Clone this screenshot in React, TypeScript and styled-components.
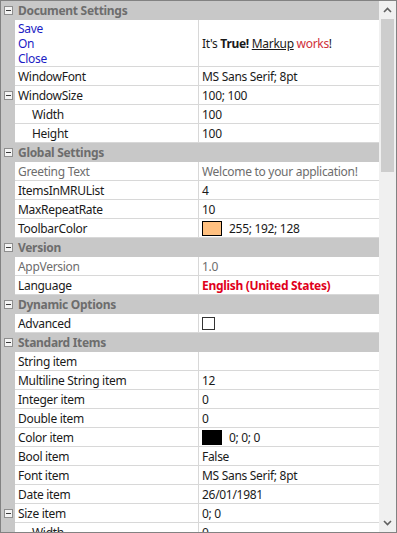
import React from 'react';
import styled, { createGlobalStyle } from 'styled-components';

const GlobalStyle = createGlobalStyle`
    html, body {
        margin: 0;
        padding: 0;
        background: #fff;
    }
    body {
        font-family: 'Noto Sans', 'Liberation Sans', sans-serif;
        font-size: 12px;
        letter-spacing: -0.3px;
        color: #1a1a1a;
    }
`;

const GridFrame = styled.div`
    width: 397px;
    height: 533px;
    box-sizing: border-box;
    border: 1px solid #828282;
    display: flex;
    overflow: hidden;
    background: #fff;
`;

const RowsArea = styled.div`
    flex: 1;
    display: flex;
    flex-direction: column;
    overflow: hidden;
`;

const CategoryRow = styled.div`
    flex: none;
    height: 19px;
    display: grid;
    grid-template-columns: 14px 1fr;
    align-items: center;
    background: #c8c8c8;
    color: #6d6d6d;
    font-weight: bold;
`;

const PropRow = styled.div<{ tall?: number }>`
    flex: none;
    height: ${p => (p.tall ? p.tall : 19)}px;
    display: grid;
    grid-template-columns: 14px 184px 1fr;
`;

const MarginCell = styled.div`
    background: #c8c8c8;
    display: flex;
    align-items: center;
    justify-content: center;
`;

const NameCell = styled.div<{ indent?: boolean; disabled?: boolean }>`
    box-sizing: border-box;
    border-bottom: 1px solid #d8d8d8;
    border-right: 1px solid #d8d8d8;
    padding-left: ${p => (p.indent ? 17 : 3)}px;
    display: flex;
    align-items: center;
    white-space: nowrap;
    overflow: hidden;
    color: ${p => (p.disabled ? '#6d6d6d' : 'inherit')};
`;

const ValueCell = styled.div<{ disabled?: boolean; accent?: boolean }>`
    box-sizing: border-box;
    border-bottom: 1px solid #d8d8d8;
    padding-left: 3px;
    display: flex;
    align-items: center;
    gap: 7px;
    white-space: nowrap;
    overflow: hidden;
    color: ${p => (p.disabled ? '#6d6d6d' : p.accent ? '#e0001b' : 'inherit')};
    font-weight: ${p => (p.accent ? 'bold' : 'normal')};
`;

const CategoryLabel = styled.div`
    padding-left: 3px;
`;

const Expander = styled.span`
    width: 9px;
    height: 9px;
    box-sizing: border-box;
    border: 1px solid #8e8e8e;
    background: #f4f4f4;
    position: relative;
    &::after {
        content: '';
        position: absolute;
        left: 1px;
        right: 1px;
        top: 3px;
        height: 1px;
        background: #3c3c3c;
    }
`;

const LinkList = styled.div`
    display: flex;
    flex-direction: column;
    line-height: 15px;
    color: #1c1cc4;
`;

const Swatch = styled.span<{ color: string }>`
    width: 20px;
    height: 15px;
    box-sizing: border-box;
    border: 1px solid #000;
    background: ${p => p.color};
    flex: none;
`;

const CheckBox = styled.span`
    width: 13px;
    height: 13px;
    box-sizing: border-box;
    border: 1px solid #333;
    background: #fff;
`;

const Bold = styled.b``;
const Underlined = styled.span`
    text-decoration: underline;
`;
const RedText = styled.span`
    color: #d0303a;
`;

const ScrollTrack = styled.div`
    width: 17px;
    flex: none;
    background: #f0f0f0;
    display: flex;
    flex-direction: column;
    align-items: center;
`;

const ScrollButton = styled.div`
    height: 18px;
    width: 17px;
    display: flex;
    align-items: center;
    justify-content: center;
    flex: none;
`;

const ScrollThumb = styled.div`
    width: 13px;
    height: 153px;
    background: #cdcdcd;
    flex: none;
`;

const ScrollSpacer = styled.div`
    flex: 1;
`;

const Chevron = ({ down }: { down?: boolean }) => (
    <svg width="9" height="6" viewBox="0 0 9 6">
        <path
            d={down ? 'M1 1 L4.5 4.5 L8 1' : 'M1 5 L4.5 1.5 L8 5'}
            fill="none"
            stroke="#606060"
            strokeWidth="1.6"
        />
    </svg>
);

type Item =
    | { kind: 'cat'; label: string }
    | {
          kind: 'prop';
          name: string;
          value: React.ReactNode;
          indent?: boolean;
          expand?: boolean;
          disabled?: boolean;
          accent?: boolean;
          tall?: number;
          nameNode?: React.ReactNode;
      };

const items: Item[] = [
    { kind: 'cat', label: 'Document Settings' },
    {
        kind: 'prop',
        name: '',
        tall: 47,
        nameNode: (
            <LinkList>
                <span>Save</span>
                <span>On</span>
                <span>Close</span>
            </LinkList>
        ),
        value: (
            <span>
                It's <Bold>True!</Bold> <Underlined>Markup</Underlined> <RedText>works</RedText>!
            </span>
        ),
    },
    { kind: 'prop', name: 'WindowFont', value: 'MS Sans Serif; 8pt' },
    { kind: 'prop', name: 'WindowSize', value: '100; 100', expand: true },
    { kind: 'prop', name: 'Width', value: '100', indent: true },
    { kind: 'prop', name: 'Height', value: '100', indent: true },
    { kind: 'cat', label: 'Global Settings' },
    { kind: 'prop', name: 'Greeting Text', value: 'Welcome to your application!', disabled: true },
    { kind: 'prop', name: 'ItemsInMRUList', value: '4' },
    { kind: 'prop', name: 'MaxRepeatRate', value: '10' },
    {
        kind: 'prop',
        name: 'ToolbarColor',
        value: (
            <>
                <Swatch color="#ffc080" />
                <span>255; 192; 128</span>
            </>
        ),
    },
    { kind: 'cat', label: 'Version' },
    { kind: 'prop', name: 'AppVersion', value: '1.0', disabled: true },
    { kind: 'prop', name: 'Language', value: 'English (United States)', accent: true },
    { kind: 'cat', label: 'Dynamic Options' },
    { kind: 'prop', name: 'Advanced', value: <CheckBox /> },
    { kind: 'cat', label: 'Standard Items' },
    { kind: 'prop', name: 'String item', value: '' },
    { kind: 'prop', name: 'Multiline String item', value: '12' },
    { kind: 'prop', name: 'Integer item', value: '0' },
    { kind: 'prop', name: 'Double item', value: '0' },
    {
        kind: 'prop',
        name: 'Color item',
        value: (
            <>
                <Swatch color="#000" />
                <span>0; 0; 0</span>
            </>
        ),
    },
    { kind: 'prop', name: 'Bool item', value: 'False' },
    { kind: 'prop', name: 'Font item', value: 'MS Sans Serif; 8pt' },
    { kind: 'prop', name: 'Date item', value: '26/01/1981' },
    { kind: 'prop', name: 'Size item', value: '0; 0', expand: true },
    { kind: 'prop', name: 'Width', value: '0', indent: true },
];

const App = () => {
    return (
        <>
            <GlobalStyle />
            <GridFrame>
                <RowsArea>
                    {items.map((item, i) => {
                        if (item.kind === 'cat') {
                            return (
                                <CategoryRow key={i}>
                                    <MarginCell>
                                        <Expander />
                                    </MarginCell>
                                    <CategoryLabel>{item.label}</CategoryLabel>
                                </CategoryRow>
                            );
                        }
                        return (
                            <PropRow key={i} tall={item.tall}>
                                <MarginCell>{item.expand && <Expander />}</MarginCell>
                                <NameCell indent={item.indent} disabled={item.disabled}>
                                    {item.nameNode ?? item.name}
                                </NameCell>
                                <ValueCell disabled={item.disabled} accent={item.accent}>
                                    {item.value}
                                </ValueCell>
                            </PropRow>
                        );
                    })}
                </RowsArea>
                <ScrollTrack>
                    <ScrollButton>
                        <Chevron />
                    </ScrollButton>
                    <ScrollThumb />
                    <ScrollSpacer />
                    <ScrollButton>
                        <Chevron down />
                    </ScrollButton>
                </ScrollTrack>
            </GridFrame>
        </>
    );
};

export default App;
